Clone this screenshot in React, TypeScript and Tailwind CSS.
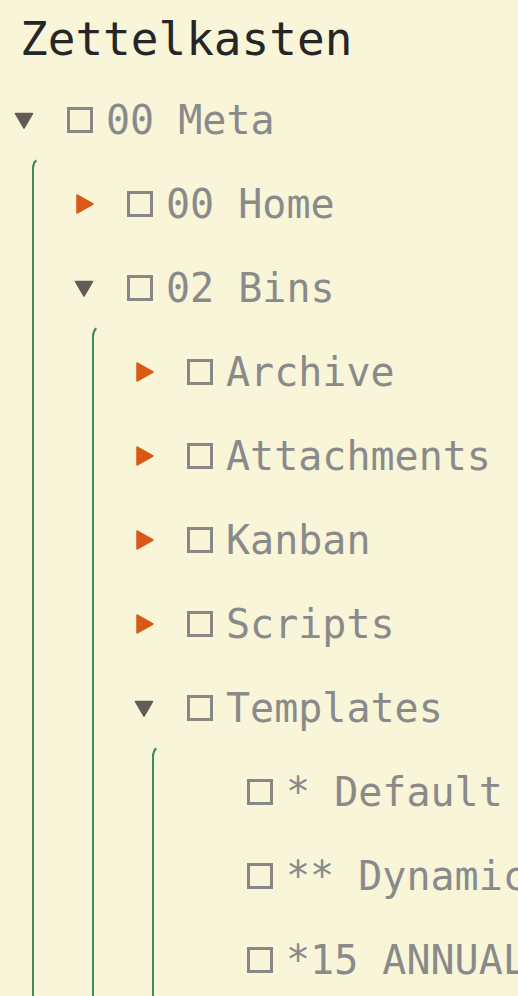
import React from "react";

type Node = {
  name: string;
  open?: boolean;
  children?: Node[];
};

const TREE: Node[] = [
  {
    name: "00 Meta",
    open: true,
    children: [
      { name: "00 Home", children: [] },
      {
        name: "02 Bins",
        open: true,
        children: [
          { name: "Archive", children: [] },
          { name: "Attachments", children: [] },
          { name: "Kanban", children: [] },
          { name: "Scripts", children: [] },
          {
            name: "Templates",
            open: true,
            children: [
              { name: "* Default" },
              { name: "** Dynamic Template" },
              { name: "*15 ANNUAL REVIEW" },
              { name: "*16 MONTHLY REVIEW" },
            ],
          },
        ],
      },
    ],
  },
];

const Caret = ({ open }: { open: boolean }) =>
  open ? (
    <svg width="22" height="22" viewBox="0 0 22 22">
      <path
        d="M2.5 4.5 L19.5 4.5 L11 19 Z"
        fill="#655b56"
        stroke="#655b56"
        strokeWidth="1.5"
        strokeLinejoin="round"
      />
    </svg>
  ) : (
    <svg width="22" height="22" viewBox="0 0 22 22">
      <path
        d="M4 2 L20 11 L4 20 Z"
        fill="#d95a16"
        stroke="#d95a16"
        strokeWidth="1.5"
        strokeLinejoin="round"
      />
    </svg>
  );

const Row: React.FC<{ node: Node }> = ({ node }) => {
  const hasKids = node.children !== undefined;
  return (
    <div>
      <div className="flex h-[84px] items-center whitespace-nowrap">
        <div className="ml-[13px] flex w-[22px] shrink-0 items-center justify-center">
          {hasKids && <Caret open={!!node.open} />}
        </div>
        <div className="ml-[32px] h-[26px] w-[26px] shrink-0 border-[3px] border-[#888888]" />
        <span className="ml-[13px] text-[40px] text-[#8a8a8a]">{node.name}</span>
      </div>
      {node.open && node.children && (
        <div className="ml-[32px] -mt-[6px] rounded-tl-[12px] border-l-2 border-t-2 border-t-transparent border-l-[#3f8a5a] pt-[4px] pl-[26px]">
          {node.children.map((c) => (
            <Row key={c.name} node={c} />
          ))}
        </div>
      )}
    </div>
  );
};

export default function App() {
  return (
    <div
      className="h-[996px] w-full overflow-hidden bg-[#f8f5d9]"
      style={{ fontFamily: '"DejaVu Sans Mono", monospace' }}
    >
      <div className="flex h-[78px] items-center pl-[20px] text-[46px] text-[#262626] whitespace-nowrap">
        Zettelkasten
      </div>
      {TREE.map((n) => (
        <Row key={n.name} node={n} />
      ))}
    </div>
  );
}
